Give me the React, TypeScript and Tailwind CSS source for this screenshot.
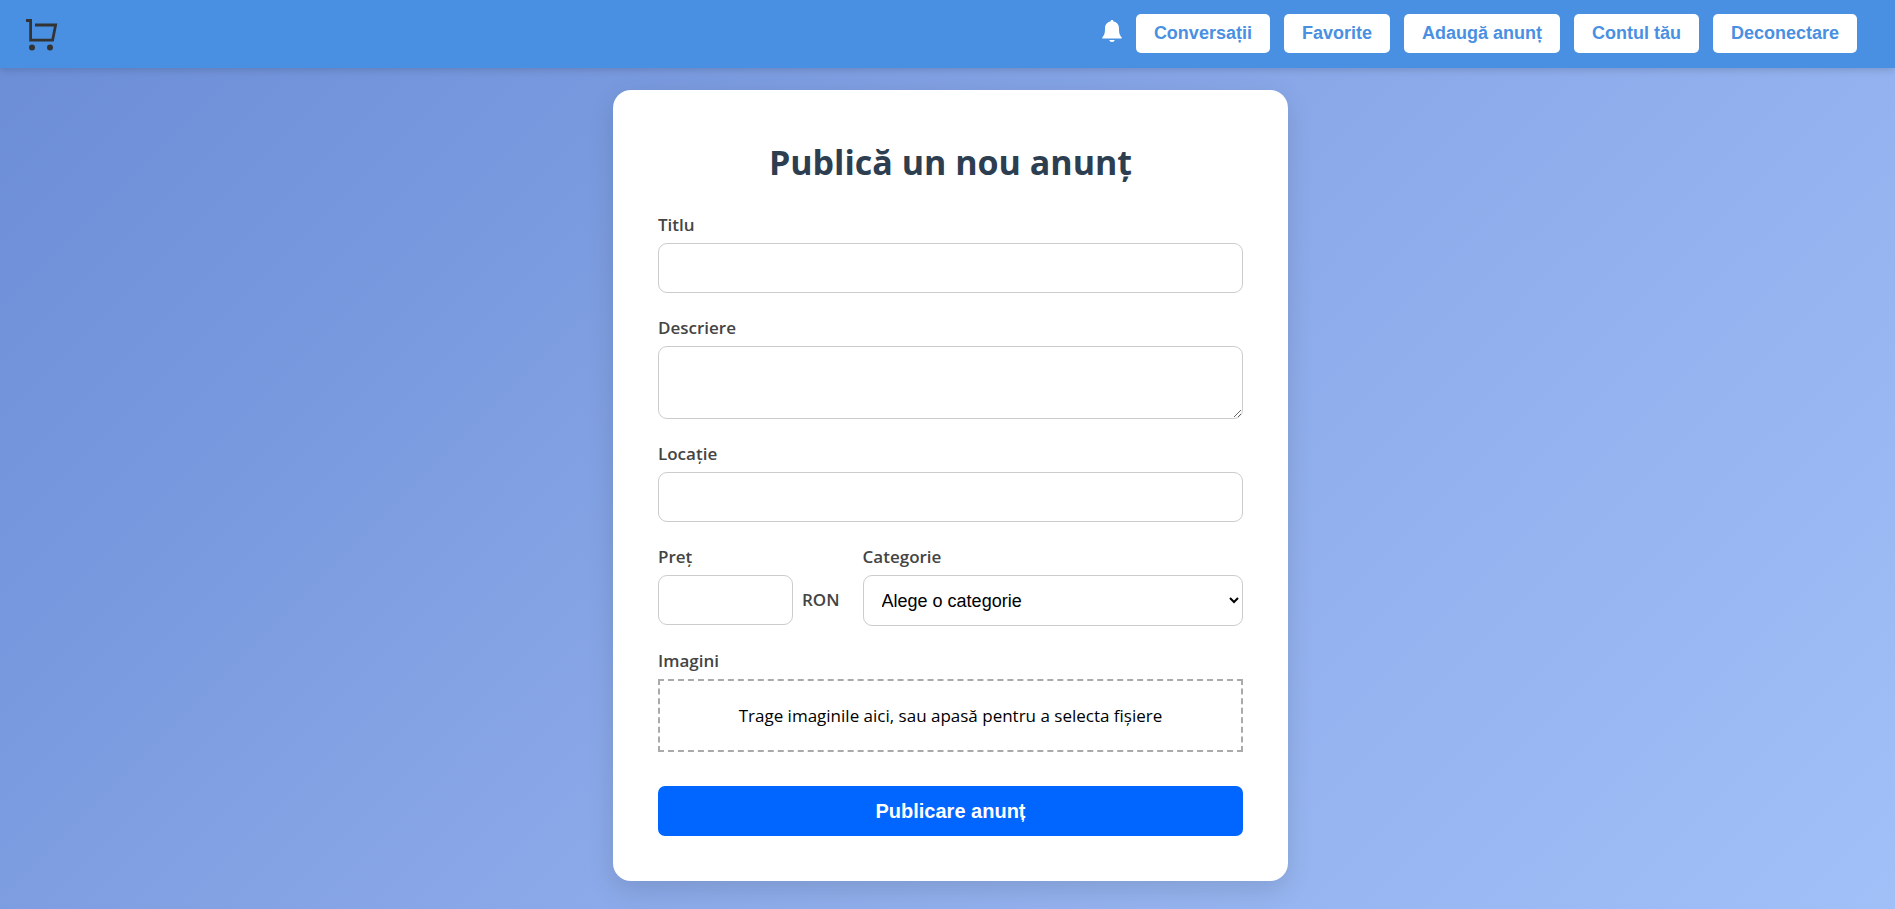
import React from "react";

const navItems = ["Conversații", "Favorite", "Adaugă anunț", "Contul tău", "Deconectare"];

const fieldClass =
  "block w-full rounded-[9px] border border-[#cccccc] bg-white px-4 font-['Liberation_Sans',Arial,sans-serif] text-[18px] text-black outline-none focus:border-[#0066ff]";
const labelClass = "mb-1.5 block text-[17px] leading-6 font-semibold text-[#444444]";

function CartIcon() {
  return (
    <svg viewBox="0 0 32 32" className="size-8" fill="none" stroke="#333333" strokeWidth="2.8" aria-hidden="true">
      <path d="M0 1.5H4.6V21.2H26.6L29.6 6H9" />
      <circle cx="6" cy="28.5" r="3" fill="#333333" stroke="none" />
      <circle cx="24" cy="28.5" r="3" fill="#333333" stroke="none" />
    </svg>
  );
}

function BellIcon() {
  return (
    <svg viewBox="0 0 20 22" className="h-[22px] w-5" fill="currentColor" aria-hidden="true">
      <path d="M10 0C10.9 0 11.5 .6 11.5 1.4C14.8 2.1 17 4.7 17 8.2C17 13 17.6 15 19.6 17.2C20 17.9 19.7 18.5 19 18.5H1C.3 18.5 0 17.9 .4 17.2C2.4 15 3 13 3 8.2C3 4.7 5.2 2.1 8.5 1.4C8.5 .6 9.1 0 10 0Z" />
      <path d="M7.3 20H12.7C12.5 21.2 11.4 22 10 22S7.5 21.2 7.3 20Z" />
    </svg>
  );
}

function Header() {
  return (
    <header className="relative flex h-[68px] items-center justify-between bg-[#4a90e2] pr-[38px] pl-[26px] shadow-[0_2px_7px_rgba(0,0,0,0.15)]">
      <a href="#" aria-label="Acasă" className="pt-0.5">
        <CartIcon />
      </a>
      <nav className="flex items-center gap-[14px] pb-[2px]">
        <button type="button" aria-label="Notificări" className="pb-1 text-white">
          <BellIcon />
        </button>
        {navItems.map((item) => (
          <button
            key={item}
            type="button"
            className="h-[39px] rounded-[5px] bg-white px-[18px] font-['Liberation_Sans',Arial,sans-serif] text-[18px] font-bold text-[#4a90e2]"
          >
            {item}
          </button>
        ))}
      </nav>
    </header>
  );
}

export default function App() {
  return (
    <div className="flex min-h-screen flex-col bg-linear-[135deg,#6b8dd6,#7899de_25%,#8aa8e8_50%,#a1c0f8] font-['Open_Sans','Noto_Sans',sans-serif]">
      <Header />
      <main className="flex justify-center pt-[22px] pb-7 pl-1.5">
        <form
          className="w-full max-w-[675px] rounded-[18px] bg-white p-[45px] shadow-[0_9px_27px_rgba(0,0,0,0.12)]"
          onSubmit={(event) => event.preventDefault()}
        >
          <h1 className="mb-6 text-center text-[34px] leading-[54px] font-bold text-[#2c3e50]">Publică un nou anunț</h1>

          <div className="mb-[23px]">
            <label htmlFor="title" className={labelClass}>Titlu</label>
            <input id="title" type="text" className={`${fieldClass} h-[50px]`} />
          </div>

          <div className="mb-[23px]">
            <label htmlFor="description" className={labelClass}>Descriere</label>
            <textarea id="description" className={`${fieldClass} h-[73px] resize-y`} />
          </div>

          <div className="mb-[23px]">
            <label htmlFor="location" className={labelClass}>Locație</label>
            <input id="location" type="text" className={`${fieldClass} h-[50px]`} />
          </div>

          <div className="mb-[23px] flex gap-[23px]">
            <div>
              <label htmlFor="price" className={labelClass}>Preț</label>
              <div className="flex items-center gap-[9px]">
                <div className="w-[135px]">
                  <input id="price" type="text" inputMode="numeric" className={`${fieldClass} h-[50px]`} />
                </div>
                <span className="text-[17px] font-semibold text-[#444444]">RON</span>
              </div>
            </div>
            <div className="flex-1">
              <label htmlFor="category" className={labelClass}>Categorie</label>
              <select id="category" className={`${fieldClass} h-[51px] pr-0 pl-[14px]`}>
                <option>Alege o categorie</option>
              </select>
            </div>
          </div>

          <div className="mb-[34px]">
            <label htmlFor="images" className={labelClass}>Imagini</label>
            <label
              htmlFor="images"
              className="flex h-[73px] cursor-pointer items-center justify-center border-2 border-dashed border-[#aaaaaa] text-[17px] text-black"
            >
              Trage imaginile aici, sau apasă pentru a selecta fișiere
            </label>
            <input id="images" type="file" multiple className="hidden" />
          </div>

          <button
            type="submit"
            className="block h-[50px] w-full rounded-[7px] bg-[#0066ff] font-['Liberation_Sans',Arial,sans-serif] text-[20px] font-bold text-white"
          >
            Publicare anunț
          </button>
        </form>
      </main>
    </div>
  );
}
